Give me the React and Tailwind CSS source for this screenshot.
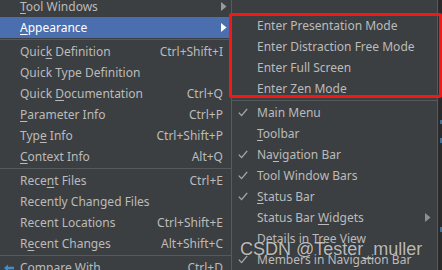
import React from "react";

const U = ({ children }) => (
  <span className="underline decoration-1 underline-offset-[2px]">{children}</span>
);

const Arrow = ({ color }) => (
  <svg width="6" height="9" viewBox="0 0 6 9" className="shrink-0">
    <path d="M0 0 L5.5 4.5 L0 9 Z" fill={color} />
  </svg>
);

const Check = () => (
  <svg width="10" height="9" viewBox="0 0 10 9" className="shrink-0">
    <path d="M0.8 4.6 L3.6 7.6 L9.2 0.8" fill="none" stroke="#a9a9a9" strokeWidth="1.3" />
  </svg>
);

const LeftRow = ({ children, shortcut, arrow, selected }) => (
  <div
    className={
      "flex items-center h-[21px] shrink-0 pl-[20px] " +
      (arrow ? "pr-[4px] " : "pr-[8px] ") +
      (selected ? "bg-[#4b6eaf] text-[#ffffff]" : "")
    }
  >
    <span className="flex-1 whitespace-nowrap">{children}</span>
    {shortcut && <span className="whitespace-nowrap">{shortcut}</span>}
    {arrow && <Arrow color={selected ? "#ffffff" : "#9a9a9a"} />}
  </div>
);

const Sep = () => (
  <div className="h-[3px] shrink-0 flex flex-col justify-center">
    <div className="h-px bg-[#55595b]" />
  </div>
);

const SubRow = ({ children, checked, arrow }) => (
  <div className="flex items-center h-[21px] shrink-0 pl-[6px] pr-[6px]">
    <span className="w-[19px] shrink-0 flex items-center">{checked && <Check />}</span>
    <span className="flex-1 whitespace-nowrap">{children}</span>
    {arrow && <Arrow color="#8f8f8f" />}
  </div>
);

export default function App() {
  return (
    <div className="relative w-[442px] h-[270px] overflow-hidden bg-[#3c3f41] flex font-['Noto_Sans',sans-serif] text-[12px] leading-none text-[#bbbbbb]">
      <div className="w-[231px] shrink-0 flex flex-col -mt-[4px]">
        <LeftRow arrow><U>T</U>ool Windows</LeftRow>
        <LeftRow arrow selected><U>A</U>ppearance</LeftRow>
        <Sep />
        <LeftRow shortcut="Ctrl+Shift+I">Quic<U>k</U> Definition</LeftRow>
        <LeftRow>Quick Type Definition</LeftRow>
        <LeftRow shortcut="Ctrl+Q">Quick <U>D</U>ocumentation</LeftRow>
        <LeftRow shortcut="Ctrl+P"><U>P</U>arameter Info</LeftRow>
        <LeftRow shortcut="Ctrl+Shift+P">Typ<U>e</U> Info</LeftRow>
        <LeftRow shortcut="Alt+Q"><U>C</U>ontext Info</LeftRow>
        <Sep />
        <LeftRow shortcut="Ctrl+E">Rece<U>n</U>t Files</LeftRow>
        <LeftRow>Recently Changed Files</LeftRow>
        <LeftRow shortcut="Ctrl+Shift+E">Recent Locations</LeftRow>
        <LeftRow shortcut="Alt+Shift+C">R<U>e</U>cent Changes</LeftRow>
        <Sep />
        <div className="flex items-center h-[21px] shrink-0 pl-[3px] pr-[8px]">
          <svg width="13" height="12" viewBox="0 0 13 12" className="shrink-0 mr-[4px]">
            <path d="M1 6 L5 2.5 L5 4.8 L11 4.8 L11 7.2 L5 7.2 L5 9.5 Z" fill="#3d8fd1" />
            <path d="M2 11 L7 8" stroke="#3d8fd1" strokeWidth="1.5" />
          </svg>
          <span className="flex-1 whitespace-nowrap">Compare With...</span>
          <span>Ctrl+D</span>
        </div>
      </div>

      <div className="w-[207px] shrink-0 border-x border-[#585b5d] flex flex-col pt-[15px]">
        <SubRow>Enter Presentation Mode</SubRow>
        <SubRow>Enter Distraction Free Mode</SubRow>
        <SubRow>Enter Full Screen</SubRow>
        <SubRow>Enter Zen Mode</SubRow>
        <Sep />
        <SubRow checked>Main Menu</SubRow>
        <SubRow><U>T</U>oolbar</SubRow>
        <SubRow checked>Na<U>v</U>igation Bar</SubRow>
        <SubRow checked>Tool Window Bars</SubRow>
        <SubRow checked><U>S</U>tatus Bar</SubRow>
        <SubRow arrow>Status Bar <U>W</U>idgets</SubRow>
        <SubRow>Details in Tree View</SubRow>
        <SubRow checked>Members in Navigation Bar</SubRow>
      </div>

      <div className="flex-1 bg-[#2b2b2b] flex flex-col items-end">
        <div className="h-[120px] shrink-0" />
        <div className="w-[2px] h-[4px] bg-[#3f6f9a]" />
        <div className="h-[14px] shrink-0" />
        <div className="w-[2px] h-[5px] bg-[#3f6f9a]" />
        <div className="h-[84px] shrink-0" />
        <div className="w-[2px] h-[5px] bg-[#3f6f9a]" />
      </div>

      <div className="absolute left-[229px] top-[13px] w-[213px] h-[85px] border-[3px] border-[#f51616] rounded-[2px]" />

      <div className="absolute left-[240px] top-[240px] font-['Liberation_Sans',sans-serif] text-[18px] leading-none text-[#e6e6e6]/80 whitespace-nowrap [text-shadow:0_0_1px_rgba(0,0,0,0.6)]">
        CSDN @Tester_muller
      </div>
    </div>
  );
}
